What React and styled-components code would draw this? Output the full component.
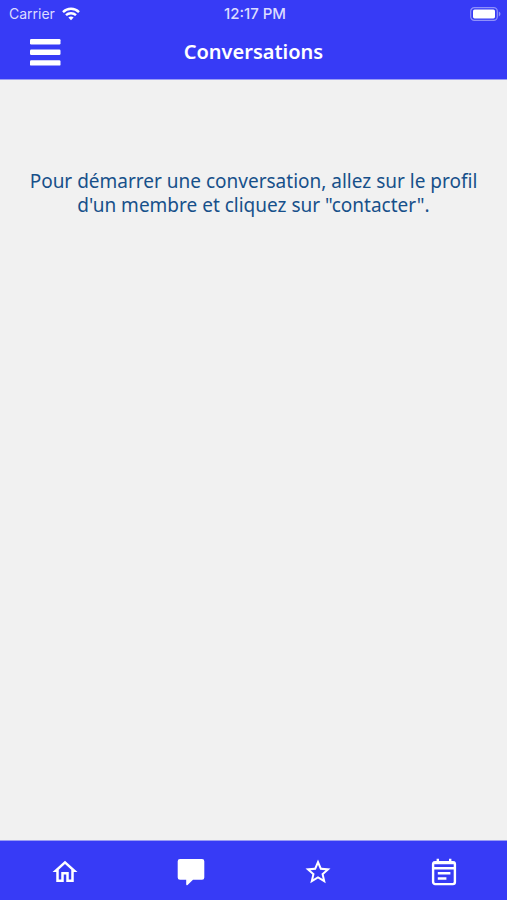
import React from 'react'
import styled, { createGlobalStyle } from 'styled-components'
import { MdOutlineHome, MdStarBorder } from 'react-icons/md'

const GlobalStyle = createGlobalStyle`
    * {
        box-sizing: border-box;
    }
    body {
        margin: 0;
        background: #f1f1f1;
        font-family: "Noto Sans", "Open Sans", sans-serif;
    }
`
const Screen = styled.div`
    display: flex;
    flex-direction: column;
    min-height: 100vh;
`
const Header = styled.header`
    background: #373bf6;
    color: #fff;
    border-bottom: 1px solid #9a9cf4;
`
const StatusBar = styled.div`
    display: grid;
    grid-template-columns: 1fr auto 1fr;
    align-items: center;
    height: 27px;
    padding: 0 6px 0 9px;
    color: #dcdcff;
    font-family: Inter, "Liberation Sans", sans-serif;
    font-size: 14px;
    line-height: 20px;
`
const Carrier = styled.div`
    display: flex;
    align-items: center;
    gap: 7px;
`
const Time = styled.span`
    font-size: 15px;
    font-weight: 500;
`
const BatteryArea = styled.div`
    display: flex;
    justify-content: flex-end;
`
const TitleBar = styled.div`
    display: grid;
    grid-template-columns: 32px 1fr 32px;
    align-items: center;
    height: 52px;
    padding: 0 29px 2px;
`
const MenuButton = styled.button`
    display: flex;
    padding: 0;
    border: 0;
    background: none;
    color: #fff;
    cursor: pointer;
`
const Title = styled.h1`
    margin: 0;
    font-size: 20px;
    line-height: 24px;
    font-weight: 600;
    text-align: center;
`
const Content = styled.main`
    flex: 1;
    padding: 89px 24px 24px;
`
const EmptyMessage = styled.p`
    margin: 0;
    color: #17508a;
    font-size: 19px;
    line-height: 24px;
    text-align: center;
`
const TabBar = styled.nav`
    display: grid;
    grid-template-columns: repeat(4, 1fr);
    height: 60px;
    padding-left: 2px;
    border-top: 1px solid #9a9cf4;
    background: #373bf6;
`
const Tab = styled.a`
    display: flex;
    align-items: center;
    justify-content: center;
    padding-top: 2px;
    color: #fff;
`

const WifiIcon = () => (
    <svg width="18" height="14" viewBox="0 0 18 14" fill="none" stroke="#fff" strokeWidth="2.4" aria-hidden="true">
        <path d="M1 5.1C5.4.7 12.6.7 17 5.1" />
        <path d="M4 8.2C6.8 5.5 11.2 5.5 14 8.2" />
        <path d="M6.4 10.6C7.9 9.2 10.1 9.2 11.6 10.6L9 13.3Z" fill="#fff" stroke="none" />
    </svg>
)

const BatteryIcon = () => (
    <svg width="31" height="14" viewBox="0 0 31 14" aria-hidden="true">
        <rect x=".7" y=".7" width="26.6" height="12.6" rx="3.6" fill="none" stroke="#8f91fa" strokeWidth="1.2" />
        <rect x="3" y="2.6" width="22" height="8.8" rx="1.6" fill="#fff" />
        <path d="M28.8 4.6C31 5.4 31 8.6 28.8 9.4Z" fill="#8f91fa" />
    </svg>
)

const MenuIcon = () => (
    <svg width="32" height="28" viewBox="0 0 32 28" fill="currentColor" aria-hidden="true">
        <rect x="1" y="1" width="30.5" height="5.4" rx="1.2" />
        <rect x="1" y="11.6" width="30.5" height="5.4" rx="1.2" />
        <rect x="1" y="22.2" width="30.5" height="5.4" rx="1.2" />
    </svg>
)

const ChatIcon = () => (
    <svg width="28" height="28" viewBox="0 0 28 28" fill="currentColor" aria-hidden="true">
        <path d="M3 1H25Q27.3 1 27.3 3.3V19.5Q27.3 21.8 25 21.8H16L10.6 26.9Q9.2 28 9.2 26V21.8H3Q.7 21.8.7 19.5V3.3Q.7 1 3 1Z" />
    </svg>
)

const AgendaIcon = () => (
    <svg width="26" height="28" viewBox="0 0 26 28" fill="none" stroke="currentColor" strokeWidth="2.4" aria-hidden="true">
        <rect x="2.1" y="4.1" width="21.8" height="22" rx="2" />
        <path d="M2 5H24M2 10.3H24M6.8.8V4M19.2.8V4M6.8 15.3H19.4M6.8 20.5H15.4" />
    </svg>
)

const tabs = [
    { label: 'Accueil', href: '#accueil', icon: <MdOutlineHome size={30} /> },
    { label: 'Conversations', href: '#conversations', icon: <ChatIcon /> },
    { label: 'Favoris', href: '#favoris', icon: <MdStarBorder size={30} /> },
    { label: 'Agenda', href: '#agenda', icon: <AgendaIcon /> },
]

const App = () => (
    <Screen>
        <GlobalStyle />
        <Header>
            <StatusBar>
                <Carrier>
                    Carrier
                    <WifiIcon />
                </Carrier>
                <Time>12:17 PM</Time>
                <BatteryArea>
                    <BatteryIcon />
                </BatteryArea>
            </StatusBar>
            <TitleBar>
                <MenuButton type="button" aria-label="Menu">
                    <MenuIcon />
                </MenuButton>
                <Title>Conversations</Title>
            </TitleBar>
        </Header>
        <Content>
            <EmptyMessage>
                Pour démarrer une conversation, allez sur le profil d'un membre et cliquez sur "contacter".
            </EmptyMessage>
        </Content>
        <TabBar>
            {tabs.map(tab => (
                <Tab key={tab.label} href={tab.href} aria-label={tab.label}>
                    {tab.icon}
                </Tab>
            ))}
        </TabBar>
    </Screen>
)

export default App
